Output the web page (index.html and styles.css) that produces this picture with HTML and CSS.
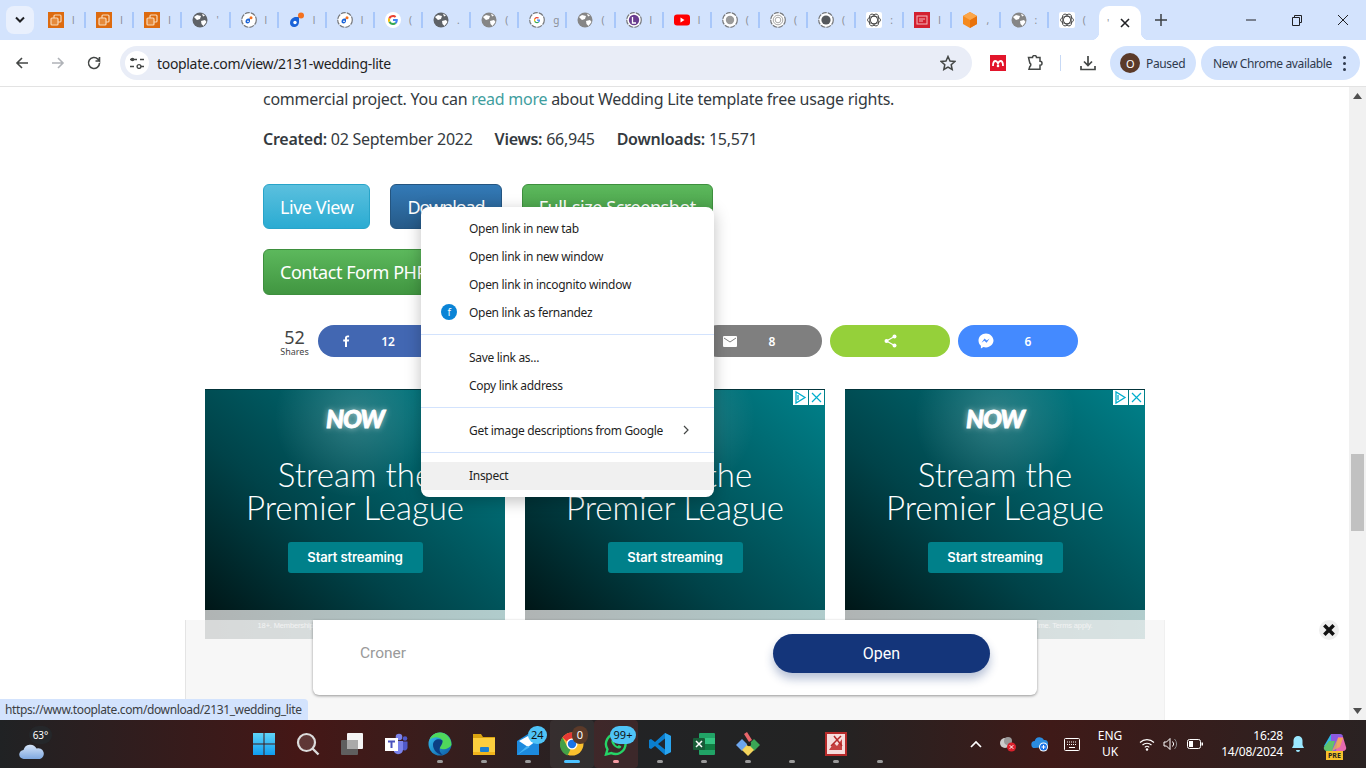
FILE: index.html
```html
<!DOCTYPE html>
<html lang="en">

<head>
    <meta charset="UTF-8">
    <title>Wedding Lite</title>
    <link rel="stylesheet" href="styles.css">
</head>

<body>
    <!-- favicons and other repeated icons -->
    <svg class="sprite" width="0" height="0">
        <symbol id="aws" viewBox="0 0 16 16">
            <rect width="16" height="16" fill="#dd6b10" />
            <rect x="6" y="3" width="7" height="7" rx="1" fill="none" stroke="#f8d9b8" stroke-width="1.2" />
            <rect x="3" y="6" width="7" height="7" rx="1" fill="#e58a3c" stroke="#f8d9b8" stroke-width="1.2" />
        </symbol>
        <symbol id="globe" viewBox="0 0 16 16">
            <circle cx="8" cy="8" r="7.5" fill="currentColor" />
            <path d="M2 5l3-2 4 1-1 3-3 1zM9 9l4-1 1.5 2-3 4-2-2zM10 1.500l3 2-2 1z" fill="#fff" />
        </symbol>
        <symbol id="ring" viewBox="0 0 16 16">
            <circle cx="8" cy="8" r="7.300" fill="#fff" stroke="#77797d" stroke-width="1.200" stroke-dasharray="5 1" />
        </symbol>
        <symbol id="blue-o" viewBox="0 0 16 16">
            <path d="M1 11c0-3.500 3-6 6-6h3v5c0 3-2.500 5-5 5-2.500 0-4-1.800-4-4z" fill="#1a63d8" />
            <circle cx="6" cy="10.500" r="1.700" fill="#fff" />
            <circle cx="12" cy="3.500" r="3" fill="#f4711f" />
        </symbol>
        <symbol id="google" viewBox="0 0 16 16">
            <circle cx="8" cy="8" r="8" fill="#fff" />
            <path d="M12.800 8.100c0-.4 0-.7-.1-1H8v2h2.700c-.1.600-.5 1.200-1 1.500l1.600 1.200c1-.9 1.500-2.200 1.500-3.700z" fill="#4285f4" />
            <path d="M8 13c1.300 0 2.400-.4 3.300-1.200l-1.600-1.200c-.5.300-1 .5-1.700.5-1.300 0-2.400-.9-2.800-2L3.500 10.300C4.300 11.900 6 13 8 13z" fill="#34a853" />
            <path d="M5.200 9.100c-.2-.7-.2-1.500 0-2.200L3.500 5.700c-.7 1.400-.7 3.200 0 4.600z" fill="#fbbc05" />
            <path d="M8 5c.7 0 1.400.3 1.900.7l1.400-1.400C10.400 3.500 9.300 3 8 3 6 3 4.300 4.100 3.500 5.700l1.700 1.200C5.600 5.800 6.700 5 8 5z" fill="#ea4335" />
        </symbol>
        <symbol id="openai" viewBox="0 0 16 16">
            <rect width="16" height="16" rx="2" fill="#fff" />
            <g fill="none" stroke="#333" stroke-width=".8">
                <ellipse cx="8" cy="8" rx="6.500" ry="3.600" />
                <ellipse cx="8" cy="8" rx="6.500" ry="3.600" transform="rotate(60 8 8)" />
                <ellipse cx="8" cy="8" rx="6.500" ry="3.600" transform="rotate(120 8 8)" />
            </g>
        </symbol>
    </svg>

    <div class="tabstrip">
        <button class="tabSearch">
            <svg width="12" height="8" viewBox="0 0 12 8"><path d="M2 1.500l4 4 4-4" fill="none" stroke="#202124" stroke-width="2" /></svg>
        </button>
        <div class="tabs">
            <div class="tab"><svg class="fav"><use href="#aws" /></svg><span class="tabTitle">l</span></div>
            <div class="tab"><svg class="fav"><use href="#aws" /></svg><span class="tabTitle">l</span></div>
            <div class="tab"><svg class="fav"><use href="#aws" /></svg><span class="tabTitle">l</span></div>
            <div class="tab"><svg class="fav globeDark"><use href="#globe" /></svg><span class="tabTitle">'</span></div>
            <div class="tab"><svg class="fav"><use href="#ring" /><use href="#blue-o" x="4" y="4" width="8" height="8" /></svg><span class="tabTitle">l</span></div>
            <div class="tab"><svg class="fav"><use href="#blue-o" /></svg><span class="tabTitle">l</span></div>
            <div class="tab"><svg class="fav"><use href="#ring" /><use href="#blue-o" x="4" y="4" width="8" height="8" /></svg><span class="tabTitle">l</span></div>
            <div class="tab"><svg class="fav"><use href="#google" /></svg><span class="tabTitle">(</span></div>
            <div class="tab"><svg class="fav globeDark"><use href="#globe" /></svg><span class="tabTitle">.</span></div>
            <div class="tab"><svg class="fav globeGrey"><use href="#globe" /></svg><span class="tabTitle">(</span></div>
            <div class="tab"><svg class="fav"><use href="#ring" /><use href="#google" x="3" y="3" width="10" height="10" /></svg><span class="tabTitle">g</span></div>
            <div class="tab"><svg class="fav globeGrey"><use href="#globe" /></svg><span class="tabTitle">(</span></div>
            <div class="tab">
                <svg class="fav" viewBox="0 0 16 16"><use href="#ring" /><circle cx="8" cy="8" r="5.200" fill="#6a3d8f" /><path d="M6.500 5v6h3.500" fill="none" stroke="#fff" stroke-width="1.300" /></svg>
                <span class="tabTitle">l</span>
            </div>
            <div class="tab">
                <svg class="fav" viewBox="0 0 16 16"><rect y="2.500" width="16" height="11" rx="3" fill="#f00" /><path d="M6.500 5.500v5l4-2.500z" fill="#fff" /></svg>
                <span class="tabTitle">l</span>
            </div>
            <div class="tab">
                <svg class="fav" viewBox="0 0 16 16"><use href="#ring" /><circle cx="8" cy="8" r="4.200" fill="#9a9a9a" /></svg>
                <span class="tabTitle">(</span>
            </div>
            <div class="tab">
                <svg class="fav" viewBox="0 0 16 16"><use href="#ring" /><circle cx="8" cy="8" r="4.800" fill="none" stroke="#a8a8a8" /><circle cx="8" cy="8" r="2.800" fill="none" stroke="#a8a8a8" /></svg>
                <span class="tabTitle">(</span>
            </div>
            <div class="tab">
                <svg class="fav" viewBox="0 0 16 16"><use href="#ring" /><circle cx="8" cy="8" r="4.600" fill="#55585c" /></svg>
                <span class="tabTitle">(</span>
            </div>
            <div class="tab"><svg class="fav"><use href="#openai" /></svg><span class="tabTitle">:</span></div>
            <div class="tab">
                <svg class="fav" viewBox="0 0 16 16"><rect width="16" height="16" fill="#d32030" /><rect x="3" y="4" width="10" height="8" fill="none" stroke="#f5b9bd" /><path d="M5 7h6M5 9h4" stroke="#f5b9bd" /></svg>
                <span class="tabTitle">l</span>
            </div>
            <div class="tab">
                <svg class="fav" viewBox="0 0 16 16"><path d="M8 0l7 4v8l-7 4-7-4V4z" fill="#f58a1f" /><path d="M8 8l7-4v8l-7 4z" fill="#e8720c" /><path d="M1 4l7-4 7 4-7 4z" fill="#fba64a" /></svg>
                <span class="tabTitle">,</span>
            </div>
            <div class="tab"><svg class="fav globeGrey"><use href="#globe" /></svg><span class="tabTitle">:</span></div>
            <div class="tab"><svg class="fav"><use href="#openai" /></svg><span class="tabTitle">(</span></div>
        </div>
        <div class="tabActive">
            <span class="tabTitle">'</span>
            <svg width="10" height="10" viewBox="0 0 10 10"><path d="M1 1l8 8M9 1l-8 8" stroke="#202124" stroke-width="1.600" /></svg>
        </div>
        <svg class="newTab" width="12" height="12" viewBox="0 0 12 12"><path d="M6 0v12M0 6h12" stroke="#3c4043" stroke-width="1.500" /></svg>
        <div class="winBtns">
            <svg class="winBtn" viewBox="0 0 46 12"><path d="M18 6h10" stroke="#202124" /></svg>
            <svg class="winBtn" viewBox="0 0 46 12"><path d="M18.500 3.500h7v8h-7zM20.500 3.500v-2h7v7h-2" fill="none" stroke="#202124" /></svg>
            <svg class="winBtn" viewBox="0 0 46 12"><path d="M18 1l10 10M28 1l-10 10" stroke="#202124" /></svg>
        </div>
    </div>

    <div class="toolbar">
        <svg class="navBtn" viewBox="0 0 16 16"><path d="M14 8H3M8 3L3 8l5 5" fill="none" stroke="#444746" stroke-width="1.600" /></svg>
        <svg class="navBtn" viewBox="0 0 16 16"><path d="M2 8h11M8 3l5 5-5 5" fill="none" stroke="#b0b3b8" stroke-width="1.600" /></svg>
        <svg class="navBtn" viewBox="0 0 16 16"><path d="M13.500 8a5.500 5.500 0 1 1-1.600-3.900L13.500 6V2M13.500 6H9.500" fill="none" stroke="#444746" stroke-width="1.600" /></svg>
        <div class="omnibox">
            <span class="siteInfo">
                <svg width="14" height="12" viewBox="0 0 14 12"><path d="M0 2.500h7M0 9.500h4" stroke="#444746" stroke-width="1.500" /><circle cx="2.500" cy="2.500" r="1.800" fill="#444746" /><path d="M10 2.500h4" stroke="#444746" stroke-width="1.500" /><circle cx="9" cy="9.500" r="1.900" fill="none" stroke="#444746" stroke-width="1.400" /><path d="M11 9.500h3" stroke="#444746" stroke-width="1.500" /></svg>
            </span>
            <span class="url">tooplate.com/view/2131-wedding-lite</span>
            <svg class="star" width="16" height="16" viewBox="0 0 16 16"><path d="M8 1.500l2 4.500 4.800.5-3.600 3.200 1 4.800L8 12.100l-4.200 2.400 1-4.800L1.200 6.500 6 6z" fill="none" stroke="#444746" stroke-width="1.500" /></svg>
        </div>
        <svg class="extMendeley" width="16" height="16" viewBox="0 0 16 16"><rect width="16" height="16" fill="#e2152b" /><path d="M3 11c0-3 1-5 2.500-5S8 8.500 8 8.500 9 6 10.500 6 13 8 13 11" fill="none" stroke="#fff" stroke-width="1.800" /><circle cx="8" cy="11" r="1.300" fill="#fff" /></svg>
        <svg class="extPuzzle" width="16" height="16" viewBox="0 0 16 16"><path d="M1.500 2.500h4a2 2 0 0 1 4 0h3.500v3.700a2 2 0 0 1 0 4v4H2l.8-2.700a2 2 0 0 0 0-3.500z" fill="none" stroke="#444746" stroke-width="1.500" /></svg>
        <span class="toolDivider"></span>
        <svg class="downloads" width="16" height="16" viewBox="0 0 16 16"><path d="M8 1v9M4 6.500L8 10.500l4-4M1 11v3.500h14V11" fill="none" stroke="#444746" stroke-width="1.700" /></svg>
        <div class="pill pillPaused"><span class="avatar">O</span>Paused</div>
        <div class="pill pillUpdate">New Chrome available<span class="dots"><i></i><i></i><i></i></span></div>
    </div>

    <div class="window">
        <div class="viewport">
            <div class="column">
                <p class="usage">commercial project. You can <a href="#">read more</a> about Wedding Lite template free usage rights.</p>
                <p class="stats"><b>Created:</b> 02 September 2022 <b class="statGap">Views:</b> 66,945 <b class="statGap">Downloads:</b> 15,571</p>
                <div class="btns">
                    <a class="btn btnInfo" href="#">Live View</a>
                    <a class="btn btnPrimary" href="#">Download</a>
                    <a class="btn btnSuccess" href="#">Full-size Screenshot</a>
                    <a class="btn btnSuccess btnContact" href="#">Contact Form PHP</a>
                </div>
                <div class="shareRow">
                    <div class="shareCount"><span class="shareNum">52</span><span class="shareLabel">Shares</span></div>
                    <div class="sharePill fb">
                        <svg width="12" height="12" viewBox="0 0 12 12"><path d="M7 12V6.500h1.800l.3-2H7V3.300c0-.6.200-1 1-1h1.100V.5C8.900.500 8.300.400 7.600.400 6 .400 5 1.400 5 3v1.500H3.200v2H5V12z" fill="#fff" /></svg>
                        <span>12</span>
                    </div>
                    <div class="sharePill tw"></div>
                    <div class="sharePill pin"></div>
                    <div class="sharePill mail">
                        <svg width="14" height="11" viewBox="0 0 14 11"><rect width="14" height="11" rx="1" fill="#fff" /><path d="M1 2l6 4 6-4" fill="none" stroke="#7f7f7f" /></svg>
                        <span>8</span>
                    </div>
                    <div class="sharePill more">
                        <svg width="13" height="14" viewBox="0 0 13 14"><path d="M10.500 2.500L2.500 7l8 4.500" fill="none" stroke="#fff" stroke-width="1.200" /><circle cx="10.500" cy="2.500" r="2" fill="#fff" /><circle cx="2.500" cy="7" r="2" fill="#fff" /><circle cx="10.500" cy="11.500" r="2" fill="#fff" /></svg>
                    </div>
                    <div class="sharePill msg">
                        <svg width="16" height="16" viewBox="0 0 16 16"><path d="M8 .5C3.800.5.500 3.600.500 7.600c0 2.100.9 3.900 2.400 5.200v2.700l2.500-1.400c.8.200 1.700.3 2.600.3 4.200 0 7.500-3.100 7.500-6.800S12.200.5 8 .5z" fill="#fff" /><path d="M3.500 9.800l3-4.300 2.300 2 2.800-2-3 4.300-2.300-2z" fill="#4a8cff" /></svg>
                        <span>6</span>
                    </div>
                </div>
            </div>

            <div class="ads">
                <div class="ad">
                    <div class="adChoices">
                        <svg class="adIcon" viewBox="0 0 15 15"><path d="M3 2v11l9-5.500zM5 5v5" fill="none" stroke="#00aecd" stroke-width="1.300" /></svg>
                        <svg class="adIcon" viewBox="0 0 15 15"><path d="M3 3l9 9M12 3l-9 9" stroke="#00aecd" stroke-width="1.200" /></svg>
                    </div>
                    <div class="adLogo">NOW</div>
                    <div class="adTitle">Stream the<br>Premier League</div>
                    <div class="adCta">Start streaming</div>
                    <div class="adFoot">18+. Membership auto-renews. Cancel anytime. Terms apply.</div>
                </div>
                <div class="ad">
                    <div class="adChoices">
                        <svg class="adIcon" viewBox="0 0 15 15"><path d="M3 2v11l9-5.500zM5 5v5" fill="none" stroke="#00aecd" stroke-width="1.300" /></svg>
                        <svg class="adIcon" viewBox="0 0 15 15"><path d="M3 3l9 9M12 3l-9 9" stroke="#00aecd" stroke-width="1.200" /></svg>
                    </div>
                    <div class="adLogo">NOW</div>
                    <div class="adTitle">Stream the<br>Premier League</div>
                    <div class="adCta">Start streaming</div>
                    <div class="adFoot">18+. Membership auto-renews. Cancel anytime. Terms apply.</div>
                </div>
                <div class="ad">
                    <div class="adChoices">
                        <svg class="adIcon" viewBox="0 0 15 15"><path d="M3 2v11l9-5.500zM5 5v5" fill="none" stroke="#00aecd" stroke-width="1.300" /></svg>
                        <svg class="adIcon" viewBox="0 0 15 15"><path d="M3 3l9 9M12 3l-9 9" stroke="#00aecd" stroke-width="1.200" /></svg>
                    </div>
                    <div class="adLogo">NOW</div>
                    <div class="adTitle">Stream the<br>Premier League</div>
                    <div class="adCta">Start streaming</div>
                    <div class="adFoot">18+. Membership auto-renews. Cancel anytime. Terms apply.</div>
                </div>
            </div>

            <!-- sticky ad along the bottom of the page -->
            <div class="anchor">
                <div class="anchorCard">
                    <span class="anchorName">Croner</span>
                    <span class="anchorOpen">Open</span>
                </div>
            </div>
            <div class="anchorClose">
                <svg width="14" height="14" viewBox="0 0 12 12"><path d="M2 2l8 8M10 2l-8 8" stroke="#111" stroke-width="3" /></svg>
            </div>

            <div class="statusBubble">https://www.tooplate.com/download/2131_wedding_lite</div>

            <div class="ctxMenu">
                <div class="ctxItem">Open link in new tab</div>
                <div class="ctxItem">Open link in new window</div>
                <div class="ctxItem">Open link in incognito window</div>
                <div class="ctxItem">
                    <span class="ctxBadge">f</span>Open link as fernandez
                </div>
                <div class="ctxSep"></div>
                <div class="ctxItem">Save link as...</div>
                <div class="ctxItem">Copy link address</div>
                <div class="ctxSep"></div>
                <div class="ctxItem ctxSub">Get image descriptions from Google
                    <svg width="6" height="10" viewBox="0 0 6 10"><path d="M1 1l4 4-4 4" fill="none" stroke="#444746" stroke-width="1.200" /></svg>
                </div>
                <div class="ctxSep"></div>
                <div class="ctxItem ctxHover">Inspect</div>
            </div>
        </div>

        <div class="scrollbar">
            <svg class="scrollArrow" width="9" height="6" viewBox="0 0 9 6"><path d="M4.500 0L9 6H0z" fill="#505050" /></svg>
            <div class="scrollThumb"></div>
            <svg class="scrollArrow" width="9" height="6" viewBox="0 0 9 6"><path d="M4.500 6L9 0H0z" fill="#505050" /></svg>
        </div>
    </div>

    <div class="taskbar">
        <div class="weather">
            <svg width="26" height="20" viewBox="0 0 26 20"><defs><linearGradient id="cloud" x1="0" y1="0" x2="0" y2="1"><stop offset="0" stop-color="#d5e4f8" /><stop offset="1" stop-color="#7fa8e0" /></linearGradient></defs><path d="M5 19a4.500 4.500 0 0 1-.5-9 7 7 0 0 1 13-1.500A5.500 5.500 0 0 1 21 19z" fill="url(#cloud)" /></svg>
            <span class="weatherTemp">63°</span>
        </div>
        <div class="apps">
            <div class="app">
                <svg width="24" height="24" viewBox="0 0 24 24"><defs><linearGradient id="win" x1="0" y1="0" x2="0" y2="1"><stop offset="0" stop-color="#5fd4f8" /><stop offset="1" stop-color="#0f9cf0" /></linearGradient></defs><path d="M1 1h10.500v10.500H1zM12.500 1H23v10.500H12.500zM1 12.500h10.500V23H1zM12.500 12.500H23V23H12.500z" fill="url(#win)" /></svg>
            </div>
            <div class="app">
                <svg width="24" height="24" viewBox="0 0 24 24"><circle cx="10.500" cy="10.500" r="8.500" fill="rgba(255,255,255,.14)" stroke="#dcdcdc" stroke-width="2.200" /><path d="M16.500 16.500l6 6" stroke="#dcdcdc" stroke-width="2.400" /></svg>
            </div>
            <div class="app">
                <svg width="24" height="24" viewBox="0 0 24 24"><rect x="1" y="8" width="17" height="15" rx="1" fill="#5f5f5f" /><rect x="7" y="1" width="16" height="16" rx="1" fill="#f4f4f4" /><rect x="7" y="8" width="11" height="9" fill="#aaa" /></svg>
            </div>
            <div class="app">
                <svg width="24" height="24" viewBox="0 0 24 24"><circle cx="15" cy="5" r="3.300" fill="#7b83eb" /><circle cx="21" cy="6.500" r="2.300" fill="#5059c9" /><path d="M10 9h9v9a5 5 0 0 1-9 2z" fill="#7b83eb" /><path d="M19 9.500h4.500V16a3 3 0 0 1-4.500 2z" fill="#5059c9" /><rect x="1" y="6" width="13" height="13" fill="#fff" /><path d="M4 9.500h7M7.500 9.500v6.500" stroke="#4b53bc" stroke-width="2" /></svg>
            </div>
            <div class="app">
                <svg width="24" height="24" viewBox="0 0 24 24"><defs><linearGradient id="edge" x1="0" y1="0" x2="1" y2="1"><stop offset="0" stop-color="#35c1f1" /><stop offset="1" stop-color="#0c59a4" /></linearGradient></defs><circle cx="12" cy="12" r="11.500" fill="url(#edge)" /><path d="M23.500 13C23.500 6 18 .5 12 .5 7 .5 3 3.500 1.500 8c3-3.500 10-4 12.500 0 1 2-.5 4-2.500 4-2.500 0-2 3 .5 4.500 4 2 9.500 0 11.500-3.500z" fill="#4fd85c" /><path d="M14.500 8.500C11 6 5 7.500 5 13c0 5 4.500 9.500 10 10-3-2-4.500-5-2.500-8.500 1-1.500 2.500-4 2-6z" fill="#0b3e84" /></svg>
            </div>
            <div class="app">
                <svg width="24" height="24" viewBox="0 0 24 24"><path d="M1 2h8l2 3h12v6H1z" fill="#d9a310" /><rect x="1" y="6" width="22" height="17" fill="#fbce3e" /><rect x="8" y="15" width="9" height="5" rx="1" fill="#1a80d0" /><rect x="1" y="20" width="22" height="3" fill="#f0b41c" /></svg>
            </div>
            <div class="app">
                <svg width="24" height="24" viewBox="0 0 24 24"><path d="M1 9l11-7 11 7v14H1z" fill="#1c8ade" /><path d="M3 9l9-5 8 5-8 6z" fill="#fff" /><path d="M1 23l10-9 3 1z" fill="#47b4f5" /></svg>
                <span class="badge badgeMail">24</span>
            </div>
            <div class="app appChrome">
                <svg width="24" height="24" viewBox="0 0 24 24"><circle cx="12" cy="12" r="11.500" fill="#fbc02d" /><path d="M12 .5A11.500 11.500 0 0 1 22 6.500H12A5.500 5.500 0 0 0 7 9.500L2.500 5.500A11.500 11.500 0 0 1 12 .5z" fill="#e53935" /><path d="M2.500 5.500L7 14a5.500 5.500 0 0 0 3.500 3.500l-3 6A11.500 11.500 0 0 1 2.500 5.500z" fill="#43a047" /><circle cx="12" cy="12" r="5.500" fill="#fff" /><circle cx="12" cy="12" r="4.200" fill="#1a73e8" /></svg>
                <span class="badge badgeChrome">0</span>
            </div>
            <div class="app appWhats">
                <svg width="24" height="24" viewBox="0 0 24 24"><path d="M12 2a10 10 0 0 0-8.500 15.300L2 22.500l5.400-1.400A10 10 0 1 0 12 2z" fill="none" stroke="#25d366" stroke-width="2.400" /><path d="M8 7.500c-1 1-1 3 1 5.500s5 4 6.500 3.500 1.800-1.500 1.700-2.200l-2.500-1.300-1 1.200c-1.500-.5-3-2-3.500-3.500l1-1-1-2.500z" fill="#25d366" /></svg>
                <span class="badge badgeWhats">99+</span>
            </div>
            <div class="app">
                <svg width="24" height="24" viewBox="0 0 24 24"><path d="M17 1l6 3v16l-6 3-10-9-4 3-2-1V8l2-1 4 3z" fill="#0a7fd0" /><path d="M17 6.500L10 12l7 5.500z" fill="#22272e" /><path d="M17 1l6 3v16l-6 3z" fill="#2aa5ef" /></svg>
            </div>
            <div class="app">
                <svg width="24" height="24" viewBox="0 0 24 24"><rect x="7" y="1" width="16" height="22" rx="1" fill="#21a366" /><path d="M7 6h16v6H7z" fill="#33c481" /><path d="M7 12h16v6H7z" fill="#107c41" /><rect x="1" y="6" width="12" height="12" rx="1" fill="#185c37" /><path d="M4 9l6 6M10 9l-6 6" stroke="#fff" stroke-width="1.500" /></svg>
            </div>
            <div class="app">
                <svg width="24" height="24" viewBox="0 0 24 24"><path d="M12 12L6 6 0 12l6 6z" fill="#6da6ee" transform="translate(0 1)" /><path d="M12 12l6-6 6 6-6 6z" fill="#3aa655" transform="translate(0 1)" /><path d="M6 18l6-6 6 6-6 6z" fill="#f3d45c" /><path d="M8 2l3-2 5 8-3 2z" fill="#e8656a" /><circle cx="13" cy="12" r="2.200" fill="#222" /></svg>
            </div>
            <div class="app"></div>
            <div class="app">
                <svg width="22" height="24" viewBox="0 0 22 24"><rect width="22" height="24" fill="#b52a2a" /><rect x="2" y="2" width="18" height="20" fill="#f6dcdc" /><path d="M4 18l5-7 3 3 5-7v11z" fill="#c74141" /><path d="M9 4l8 10M16 4L6 14" stroke="#b52a2a" stroke-width="1.500" /></svg>
            </div>
            <div class="app"></div>
        </div>
        <div class="tray">
            <div class="trayIcon"><svg width="12" height="8" viewBox="0 0 12 8"><path d="M1 7l5-5 5 5" fill="none" stroke="#fff" stroke-width="1.700" /></svg></div>
            <div class="trayIcon">
                <svg width="18" height="16" viewBox="0 0 18 16"><circle cx="6" cy="7" r="5" fill="#ccc" /><circle cx="9" cy="5" r="4" fill="#999" /><circle cx="12.500" cy="11" r="4.500" fill="#d9202c" /><path d="M10.700 9.200l3.600 3.600M14.300 9.200l-3.600 3.600" stroke="#fff" /></svg>
            </div>
            <div class="trayIcon">
                <svg width="18" height="16" viewBox="0 0 18 16"><path d="M4 12a3.500 3.500 0 0 1-.3-7 5 5 0 0 1 9.300-1 3.500 3.500 0 0 1 1 7z" fill="#2a8ce0" /><circle cx="12.500" cy="11" r="4.500" fill="#fff" /><circle cx="12.500" cy="11" r="3.500" fill="#1a73e8" /><path d="M10.500 11h4M12.500 9v4" stroke="#fff" /></svg>
            </div>
            <div class="trayIcon">
                <svg width="16" height="13" viewBox="0 0 16 13"><rect x=".5" y=".5" width="15" height="12" rx="1" fill="none" stroke="#fff" /><path d="M3 4h10M3 6.500h10" stroke="#fff" stroke-dasharray="1 1" /><path d="M5 9.500h6" stroke="#fff" /></svg>
            </div>
            <div class="lang">ENG<br>UK</div>
            <div class="trayIcon trayNarrow">
                <svg width="16" height="13" viewBox="0 0 16 13"><path d="M1 4.500a10 10 0 0 1 14 0M3.500 7a6.500 6.500 0 0 1 9 0M5.800 9.300a3.200 3.200 0 0 1 4.400 0" fill="none" stroke="#fff" stroke-width="1.100" /><circle cx="8" cy="11.500" r="1.200" fill="#fff" /></svg>
            </div>
            <div class="trayIcon trayNarrow">
                <svg width="16" height="14" viewBox="0 0 16 14"><path d="M1 5v4h2.500L7 12.500v-11L3.500 5z" fill="none" stroke="#fff" /><path d="M9.500 4.500a3.500 3.500 0 0 1 0 5" fill="none" stroke="#fff" /><path d="M11.500 2a7 7 0 0 1 0 10" fill="none" stroke="#8a8a8a" /></svg>
            </div>
            <div class="trayIcon trayNarrow">
                <svg width="16" height="10" viewBox="0 0 16 10"><rect x=".5" y=".5" width="13" height="9" rx="2" fill="none" stroke="#fff" /><rect x="2" y="2" width="4" height="6" fill="#fff" /><rect x="14.500" y="3.500" width="1.500" height="3" fill="#fff" /></svg>
            </div>
            <div class="clock">16:28<br>14/08/2024</div>
            <div class="bell">
                <svg width="14" height="18" viewBox="0 0 14 18"><path d="M7 1a4.500 4.500 0 0 0-4.500 4.500V10L1 13h12l-1.500-3V5.500A4.500 4.500 0 0 0 7 1z" fill="#9be8ff" /><path d="M5 15h4a2 2 0 0 1-4 0z" fill="#9be8ff" /></svg>
            </div>
            <div class="copilot">
                <svg width="24" height="22" viewBox="0 0 24 22"><path d="M8 1h8l-4 15H4L1 13z" fill="#2fb8e8" /><path d="M8 1h9a3 3 0 0 1 3 2l-5 15H8z" fill="#8b5be0" /><path d="M6 8h6l-3 10H4a3 3 0 0 1-3-4z" fill="#5fc36b" /><path d="M15 4h5l3 10a3 3 0 0 1-3 4h-7z" fill="#e76ab0" /><path d="M9 18l6-13h5l-3 9z" fill="#f5b942" opacity=".7" /></svg>
                <span class="copilotTag">PRE</span>
            </div>
        </div>
    </div>
</body>

</html>
```

FILE: styles.css
```css
* {
    box-sizing: border-box;
}

html,
body {
    margin: 0;
    height: 100%;
}

body {
    width: 1366px;
    height: 768px;
    overflow: hidden;
    display: flex;
    flex-direction: column;
    font-family: "Noto Sans", "Open Sans", sans-serif;
    background: #fff;
}

.sprite {
    position: absolute;
}

/* tab strip */
.tabstrip {
    height: 40px;
    flex: none;
    display: flex;
    align-items: center;
    background: #d3e3fd;
}

.tabSearch {
    width: 28px;
    height: 28px;
    margin-left: 6px;
    margin-right: 4px;
    padding: 0;
    border: 0;
    border-radius: 8px;
    background: #e9f0fd;
    display: flex;
    align-items: center;
    justify-content: center;
}

.tabs {
    display: flex;
    width: 1059px;
}

.tab {
    width: 48.14px;
    height: 16px;
    padding-left: 10px;
    display: flex;
    align-items: center;
    border-right: 2px solid #a8c7fa;
}

.tab:last-child {
    border-right: 0;
}

.fav {
    width: 16px;
    height: 16px;
    flex: none;
    color: #808080;
}

.globeDark {
    color: #5f6368;
}

.globeGrey {
    color: #868686;
}

.tabTitle {
    margin-left: 8px;
    font-size: 10px;
    line-height: 14px;
    color: #8a8e96;
}

.tabActive {
    width: 42px;
    height: 34px;
    margin-top: 6px;
    margin-left: 2px;
    flex: none;
    display: flex;
    align-items: center;
    background: #fff;
    border-radius: 10px 10px 0 0;
    position: relative;
}

/* flared feet of the selected tab */
.tabActive::before,
.tabActive::after {
    content: "";
    position: absolute;
    bottom: 0;
    width: 8px;
    height: 8px;
}

.tabActive::before {
    left: -8px;
    background: radial-gradient(circle at 0 0, #d3e3fd 8px, #fff 8.5px);
}

.tabActive::after {
    right: -8px;
    background: radial-gradient(circle at 100% 0, #d3e3fd 8px, #fff 8.5px);
}

.tabActive .tabTitle {
    width: 12px;
    margin-right: 1px;
}

.newTab {
    margin-left: 14px;
    flex: none;
}

.winBtns {
    margin-left: auto;
    display: flex;
}

.winBtn {
    width: 46px;
    height: 12px;
}

/* toolbar */
.toolbar {
    height: 47px;
    flex: none;
    display: flex;
    align-items: center;
    background: #fff;
    border-bottom: 1px solid #e3e3e3;
    border-radius: 8px 8px 0 0;
    padding-left: 14px;
}

.navBtn {
    width: 16px;
    height: 16px;
    margin-right: 20px;
    flex: none;
}

.omnibox {
    width: 852px;
    height: 34px;
    margin-left: -2px;
    flex: none;
    display: flex;
    align-items: center;
    background: #e9edf7;
    border-radius: 17px;
    padding-left: 5px;
}

.siteInfo {
    width: 24px;
    height: 24px;
    border-radius: 50%;
    background: #fff;
    flex: none;
    display: flex;
    align-items: center;
    justify-content: center;
}

.url {
    margin-left: 8px;
    font-size: 14px;
    letter-spacing: -.32px;
    color: #1f1f1f;
}

.star {
    margin-left: auto;
    margin-right: 16px;
}

.extMendeley {
    margin-left: 18px;
    flex: none;
}

.extPuzzle {
    margin-left: 21px;
    flex: none;
}

.toolDivider {
    width: 1px;
    height: 16px;
    margin-left: 17px;
    background: #c7d9f5;
    flex: none;
}

.downloads {
    margin-left: 19px;
    flex: none;
}

.pill {
    height: 34px;
    border-radius: 17px;
    background: #d3e3fd;
    display: flex;
    align-items: center;
    font-size: 12px;
    letter-spacing: -.35px;
    color: #2f3a4d;
    flex: none;
}

.pillPaused {
    width: 86px;
    margin-left: 14px;
    padding-left: 10px;
}

.avatar {
    width: 20px;
    height: 20px;
    margin-right: 6px;
    border-radius: 50%;
    background: #5b3a29;
    color: #fff;
    font-size: 11px;
    display: flex;
    align-items: center;
    justify-content: center;
}

.pillUpdate {
    width: 159px;
    margin-left: 5px;
    padding-left: 12px;
}

.dots {
    margin-left: auto;
    margin-right: 14px;
    display: flex;
    flex-direction: column;
    gap: 3px;
}

.dots i {
    width: 3px;
    height: 3px;
    border-radius: 50%;
    background: #2f3a4d;
}

/* page */
.window {
    flex: 1;
    min-height: 0;
    display: flex;
}

.viewport {
    flex: 1;
    position: relative;
    overflow: hidden;
    background: #fff;
}

.column {
    padding-left: 263px;
}

.usage,
.stats {
    margin: 0;
    font-size: 16px;
    line-height: 24px;
    letter-spacing: -.25px;
    color: #343a40;
}

.usage a {
    color: #3f9e9e;
    text-decoration: none;
}

.stats {
    margin-top: 16px;
}

.stats b {
    font-weight: 600;
}

.statGap {
    margin-left: 18px;
}

.btns {
    margin-top: 33px;
    width: 500px;
    display: flex;
    flex-wrap: wrap;
    gap: 20px;
}

.btn {
    height: 45px;
    padding: 0 16px;
    display: flex;
    align-items: center;
    border-radius: 6px;
    font-size: 18px;
    letter-spacing: -.45px;
    color: #fff;
    text-decoration: none;
}

.btnInfo {
    background: linear-gradient(#5bc0de, #2aabd2);
    border: 1px solid #28a4c9;
}

.btnPrimary {
    background: linear-gradient(#337ab7, #265a88);
    border: 1px solid #245580;
    letter-spacing: -1.05px;
}

.btnSuccess {
    background: linear-gradient(#5cb85c, #419641);
    border: 1px solid #3e8f3e;
}

.btnContact {
    width: 210px;
    height: 46px;
}

.shareRow {
    margin-top: 30px;
    display: flex;
    gap: 8px;
}

.shareCount {
    width: 31px;
    margin-left: 16px;
    display: flex;
    flex-direction: column;
    align-items: center;
    color: #444;
}

.shareNum {
    font-size: 18px;
    line-height: 20px;
    margin-top: 2px;
}

.shareLabel {
    font-size: 9px;
    line-height: 10px;
}

.sharePill {
    width: 120px;
    height: 32px;
    border-radius: 16px;
    display: grid;
    grid-template-columns: 56px 28px;
    align-items: center;
    justify-items: center;
    font-size: 12px;
    font-weight: 600;
    color: #fff;
    flex: none;
}

.fb {
    background: #4267b2;
}

.tw {
    background: #1da1f2;
}

.pin {
    background: #cb2027;
}

.mail {
    background: #7f7f7f;
}

.more {
    background: #95d03a;
    grid-template-columns: 120px;
}

.msg {
    background: #448aff;
}

/* three display ads */
.ads {
    margin-top: 32px;
    padding-left: 205px;
    display: flex;
    gap: 20px;
}

.ad {
    width: 300px;
    height: 250px;
    position: relative;
    display: flex;
    flex-direction: column;
    align-items: center;
    color: #fff;
    border-top: 1px solid #03343a;
    background:
        radial-gradient(circle at 50% 11%, rgba(255, 255, 255, .18), rgba(255, 255, 255, 0) 80px),
        linear-gradient(40deg, #000f0f 0%, #004349 40%, #00818a 100%);
}

.adChoices {
    position: absolute;
    top: 0;
    right: 1px;
    display: flex;
    gap: 1px;
}

.adIcon {
    width: 15px;
    height: 15px;
    background: #fff;
}

.adLogo {
    margin-top: 14px;
    font-family: Lato, sans-serif;
    font-size: 25px;
    line-height: 28px;
    font-weight: 900;
    font-style: italic;
    letter-spacing: -1px;
    -webkit-text-stroke: .8px #fff;
    text-shadow: 0 0 6px rgba(255, 255, 255, .7);
}

.adTitle {
    margin-top: 26px;
    font-family: Lato, sans-serif;
    font-weight: 300;
    font-size: 33px;
    line-height: 33px;
    text-align: center;
}

.adCta {
    width: 135px;
    height: 31px;
    margin-top: 18px;
    background: #00808a;
    border-radius: 3px;
    font-family: Inter, sans-serif;
    font-size: 13px;
    letter-spacing: -.1px;
    font-weight: 600;
    line-height: 30px;
    text-align: center;
}

.adFoot {
    position: absolute;
    left: 0;
    right: 0;
    bottom: 0;
    height: 29px;
    padding-top: 10px;
    background: linear-gradient(90deg, #b0b4b4, #b0cccc);
    color: #f2f4f4;
    font-family: "Liberation Sans", sans-serif;
    font-size: 7.5px;
    letter-spacing: -.15px;
    line-height: 12px;
    text-align: center;
}

/* bottom sticky ad */
.anchor {
    position: absolute;
    left: 185px;
    top: 533px;
    width: 980px;
    height: 100px;
    display: flex;
    justify-content: center;
    background: rgba(242, 242, 242, .6);
    border-left: 1px solid #e4e4e4;
    border-right: 1px solid #f0f0f0;
}

.anchorCard {
    width: 724px;
    height: 75px;
    padding: 14px 47px 0;
    display: flex;
    justify-content: space-between;
    background: #fff;
    border-radius: 0 0 6px 6px;
    box-shadow: 0 1px 3px rgba(0, 0, 0, .4);
}

.anchorName {
    margin-top: 10px;
    font-family: Roboto, sans-serif;
    font-size: 15.5px;
    color: #9a9a9a;
}

.anchorOpen {
    width: 217px;
    height: 39px;
    border-radius: 20px;
    background: #14357a;
    color: #fff;
    font-family: Roboto, sans-serif;
    font-size: 16px;
    line-height: 40px;
    text-align: center;
    box-shadow: 0 6px 10px rgba(20, 53, 122, .3);
}

.anchorClose {
    position: absolute;
    left: 1319px;
    top: 533px;
    width: 20px;
    height: 20px;
    border-radius: 50%;
    background: #eee;
    display: flex;
    align-items: center;
    justify-content: center;
}

.statusBubble {
    position: absolute;
    left: 0;
    bottom: 0;
    width: 308px;
    height: 21px;
    padding-left: 5px;
    background: #d3e3fd;
    border-radius: 0 4px 0 0;
    font-size: 12px;
    letter-spacing: -.38px;
    line-height: 21px;
    color: #3c4043;
    white-space: nowrap;
}

/* right click menu */
.ctxMenu {
    position: absolute;
    left: 421px;
    top: 120px;
    width: 293px;
    padding: 8px 0 7px;
    background: #fff;
    border-radius: 8px;
    box-shadow: 0 4px 16px rgba(0, 0, 0, .25);
}

.ctxItem {
    height: 28px;
    padding: 0 0 2px 48px;
    display: flex;
    align-items: center;
    position: relative;
    font-size: 12px;
    letter-spacing: -.3px;
    color: #1f1f1f;
}

.ctxHover {
    background: #f0f0f0;
}

.ctxSub svg {
    position: absolute;
    right: 25px;
}

.ctxBadge {
    position: absolute;
    left: 20px;
    width: 16px;
    height: 16px;
    border-radius: 50%;
    background: #0a84d6;
    color: #fff;
    font-size: 10px;
    line-height: 16px;
    text-align: center;
}

.ctxSep {
    height: 1px;
    margin: 7px 0 9px;
    background: #d3e3fd;
}

/* page scrollbar */
.scrollbar {
    width: 17px;
    flex: none;
    position: relative;
    display: flex;
    flex-direction: column;
    align-items: center;
    justify-content: space-between;
    padding: 6px 0;
    background: #f1f1f1;
}

.scrollThumb {
    position: absolute;
    left: 2px;
    top: 367px;
    width: 13px;
    height: 77px;
    background: #c1c1c1;
}

/* windows taskbar */
.taskbar {
    height: 48px;
    flex: none;
    display: flex;
    align-items: center;
    color: #fff;
    background: linear-gradient(90deg, #202224 0, #451716 300px, #3a1d1c 420px, #222325 620px, #232323 830px, #3f1a18 1050px, #2a2222 1366px);
}

.weather {
    width: 242px;
    flex: none;
    position: relative;
    height: 48px;
    padding: 20px 0 0 19px;
}

.weatherTemp {
    position: absolute;
    left: 29px;
    top: 6px;
    width: 23px;
    height: 18px;
    border-radius: 9px;
    background: #25272a;
    font-size: 10px;
    line-height: 18px;
    text-align: center;
}

.apps {
    display: flex;
    flex: none;
}

.app {
    width: 44px;
    height: 48px;
    position: relative;
    display: flex;
    align-items: center;
    justify-content: center;
}

.app::after {
    content: "";
    position: absolute;
    left: 50%;
    bottom: 5px;
    width: 6px;
    height: 3px;
    margin-left: -3px;
    border-radius: 2px;
    background: #9a9a9a;
}

.app:nth-child(-n+4)::after {
    display: none;
}

.appChrome {
    background: rgba(255, 255, 255, .06);
    border-radius: 4px;
}

.appChrome::after {
    width: 16px;
    margin-left: -8px;
    background: #4cc2ff;
}

.appWhats {
    background: rgba(255, 80, 80, .12);
    border-radius: 4px;
}

.appWhats::after {
    background: #f59aa2;
}

.badge {
    position: absolute;
    top: 6px;
    left: 22px;
    height: 18px;
    min-width: 16px;
    padding: 0 3px;
    border-radius: 9px;
    font-size: 11px;
    line-height: 18px;
    text-align: center;
    color: #111;
    background: #4fc3f7;
}

.badgeChrome {
    background: #5b3a29;
    color: #fff;
}

.badgeWhats {
    left: 16px;
    width: 26px;
}

.tray {
    margin-left: auto;
    display: flex;
    align-items: center;
    padding-right: 14px;
}

.trayIcon {
    width: 32px;
    display: flex;
    justify-content: center;
}

.trayNarrow {
    width: 24px;
}

.lang {
    width: 44px;
    margin-right: 3px;
    font-size: 12px;
    line-height: 16px;
    text-align: center;
}

.clock {
    width: 76px;
    font-size: 12px;
    letter-spacing: -.2px;
    line-height: 16px;
    text-align: right;
}

.bell {
    width: 30px;
    display: flex;
    justify-content: center;
}

.copilot {
    width: 35px;
    position: relative;
    display: flex;
    justify-content: center;
    margin-left: 4px;
}

.copilotTag {
    position: absolute;
    left: 9px;
    bottom: -5px;
    padding: 0 2px;
    background: #f6c12c;
    color: #222;
    font-size: 7px;
    line-height: 9px;
    font-weight: 700;
}
```
